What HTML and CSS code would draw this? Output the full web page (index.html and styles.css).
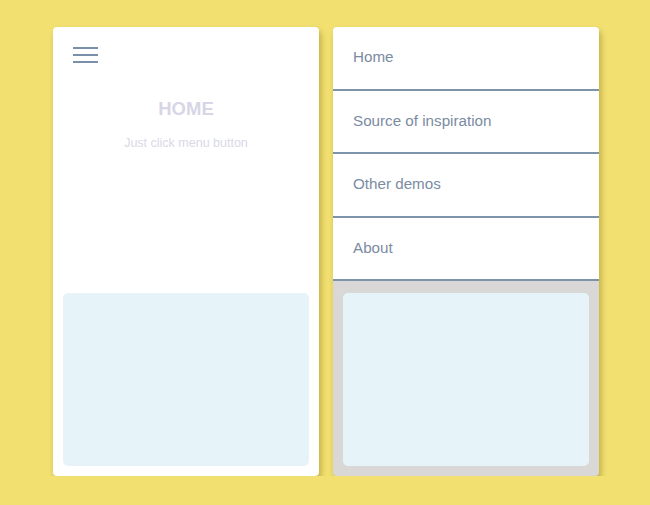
FILE: index.html
```html
<!DOCTYPE html>
<html>
<head>
<meta charset="utf-8">
<link rel="stylesheet" href="styles.css">
</head>
<body>
<div class="stage">
  <div class="card">
    <div class="content">
      <div class="burger"><span></span><span></span><span></span></div>
      <h1 class="title">HOME</h1>
      <p class="subtitle">Just click menu button</p>
    </div>
    <div class="panel"></div>
  </div>
  <div class="card card-menu">
    <ul class="menu">
      <li>Home</li>
      <li>Source of inspiration</li>
      <li>Other demos</li>
      <li>About</li>
    </ul>
    <div class="under">
      <div class="panel"></div>
    </div>
  </div>
</div>
</body>
</html>
```
FILE: styles.css
```css
html, body {
  margin: 0;
  padding: 0;
  background: #f2e171;
  font-family: "Liberation Sans", Arial, sans-serif;
}
.stage {
  display: flex;
  gap: 14px;
  padding: 27px 0 0 53px;
}
.card {
  width: 266px;
  height: 449px;
  background: #fff;
  border-radius: 4px;
  box-shadow: 2px 4px 6px rgba(110, 90, 0, 0.4);
  display: flex;
  flex-direction: column;
  padding: 10px;
  box-sizing: border-box;
  overflow: hidden;
}
.content {
  flex: 1;
  display: flex;
  flex-direction: column;
  align-items: center;
}
.burger {
  align-self: flex-start;
  margin: 10px 0 0 10px;
  width: 25px;
  display: flex;
  flex-direction: column;
  gap: 5px;
}
.burger span {
  display: block;
  height: 2px;
  background: #7a8faa;
}
.title {
  margin: 35px 0 0;
  font-size: 18.5px;
  line-height: 21px;
  font-weight: bold;
  color: #d6d6e6;
}
.subtitle {
  margin: 17px 0 0;
  font-size: 12.5px;
  line-height: 14px;
  color: #d9d9e6;
}
.panel {
  height: 173px;
  background: #e6f4fa;
  border-radius: 5px;
  flex: none;
}
.card-menu {
  padding: 0;
  background: #d9d8d6;
}
.menu {
  list-style: none;
  margin: 0;
  padding: 0;
  background: #fff;
}
.menu li {
  height: 61.5px;
  line-height: 60px;
  padding-left: 20px;
  font-size: 15.2px;
  color: #7b8ba2;
  border-bottom: 2px solid #7d93ab;
}
.under {
  flex: 1;
  display: flex;
  flex-direction: column;
  justify-content: flex-end;
  padding: 0 10px 10px;
}
```
